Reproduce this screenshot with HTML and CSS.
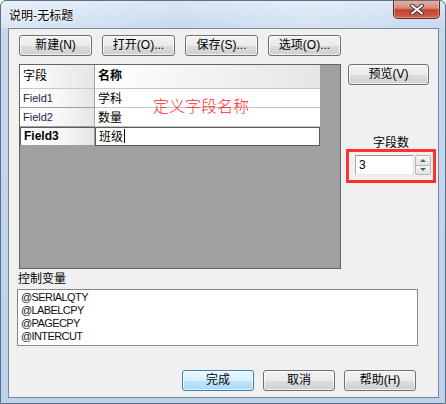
FILE: index.html
```html
<!DOCTYPE html>
<html lang="zh-CN">
<head>
<meta charset="utf-8">
<title>说明-无标题</title>
<link rel="stylesheet" href="styles.css">
</head>
<body>
<div class="window">
  <div class="titlebar">
    <span class="title">说明-无标题</span>
    <div class="close">
      <svg width="16" height="11" viewBox="0 0 16 11"><path d="M3 1.5 L13 9.5 M13 1.5 L3 9.5" stroke="#3a3a3a" stroke-width="4" stroke-linecap="round"/><path d="M3 1.5 L13 9.5 M13 1.5 L3 9.5" stroke="#ffffff" stroke-width="2" stroke-linecap="round"/></svg>
    </div>
  </div>
  <div class="client">
    <div class="toolbar">
      <div class="btn">新建(N)</div>
      <div class="btn">打开(O)...</div>
      <div class="btn">保存(S)...</div>
      <div class="btn">选项(O)...</div>
    </div>
    <div class="main">
      <div class="grid">
        <div class="row head">
          <div class="c1">字段</div>
          <div class="c2 bold">名称</div>
        </div>
        <div class="row">
          <div class="c1 fld">Field1</div>
          <div class="c2">学科</div>
        </div>
        <div class="row">
          <div class="c1 fld">Field2</div>
          <div class="c2">数量</div>
        </div>
        <div class="row current">
          <div class="c1 fld cur">Field3</div>
          <div class="c2 edit">班级<span class="caret"></span></div>
        </div>
        <div class="note">定义字段名称</div>
      </div>
      <div class="side">
        <div class="btn preview">预览(V)</div>
        <div class="count-label">字段数</div>
        <div class="highlight">
          <div class="input">3</div>
          <div class="spinner">
            <div class="arrow up"><span></span></div>
            <div class="arrow down"><span></span></div>
          </div>
        </div>
      </div>
    </div>
    <div class="vars-label">控制变量</div>
    <div class="listbox">
      <div class="item">@SERIALQTY</div>
      <div class="item">@LABELCPY</div>
      <div class="item">@PAGECPY</div>
      <div class="item">@INTERCUT</div>
    </div>
    <div class="footer">
      <div class="btn default">完成</div>
      <div class="btn">取消</div>
      <div class="btn">帮助(H)</div>
    </div>
  </div>
</div>
</body>
</html>
```

FILE: styles.css
```css
* { box-sizing: border-box; }

html, body {
  margin: 0;
  padding: 0;
  background: #ffffff;
}

body {
  font-family: "Liberation Sans", "Noto Sans CJK SC", sans-serif;
  font-size: 12px;
  color: #000;
}

.window {
  width: 446px;
  height: 404px;
  border: 1px solid #5e6f84;
  border-radius: 6px 6px 0 0;
  background: linear-gradient(180deg, #dbe7f6 0px, #c6d8ee 28px, #bcd1eb 100%);
  display: flex;
  flex-direction: column;
  overflow: hidden;
}

.titlebar {
  height: 27px;
  display: flex;
  align-items: flex-start;
  padding-left: 8px;
  background: linear-gradient(90deg, rgba(255,255,255,0.35), rgba(255,255,255,0) 40%, rgba(255,255,255,0.25) 70%, rgba(255,255,255,0) 100%);
}

.title {
  margin-top: 6px;
  font-family: "Noto Sans CJK SC", sans-serif;
  font-size: 12px;
  line-height: 16px;
  color: #000;
  text-shadow: 0 0 4px #ffffff, 0 0 2px #ffffff;
}

.close {
  margin-left: auto;
  margin-right: 5px;
  width: 47px;
  height: 19px;
  margin-top: -1px;
  border: 1px solid #5a2a24;
  border-top: none;
  border-radius: 0 0 5px 5px;
  background: linear-gradient(180deg, #e9b2a6 0%, #d98a78 45%, #c5412c 55%, #d1614a 100%);
  display: flex;
  align-items: center;
  justify-content: center;
  box-shadow: inset 0 0 0 1px rgba(255,255,255,0.35);
}

.client {
  margin: 0 6px 5px 7px;
  flex: 1;
  border: 1px solid #7a8797;
  background: #f0f0f0;
  display: flex;
  flex-direction: column;
  padding-top: 6px;
}

.btn {
  height: 21px;
  border: 1px solid #707070;
  border-radius: 3px;
  background: linear-gradient(180deg, #f2f2f2 0%, #ebebeb 50%, #dddddd 51%, #cfcfcf 100%);
  box-shadow: inset 0 0 0 1px rgba(255,255,255,0.7);
  font-family: "Liberation Sans", "Noto Sans CJK SC", sans-serif;
  font-size: 12px;
  line-height: 19px;
  text-align: center;
  color: #000;
  white-space: nowrap;
}

.btn.default {
  border-color: #3c7fb1;
  background: linear-gradient(180deg, #eaf6fd 0%, #d9f0fc 50%, #bee6fd 51%, #a7d9f5 100%);
}

.toolbar {
  display: flex;
  gap: 10px;
  padding-left: 10px;
}

.toolbar .btn { width: 73px; }

.main {
  display: flex;
  margin-top: 8px;
  padding-left: 10px;
}

.grid {
  position: relative;
  width: 322px;
  height: 205px;
  border: 1px solid #646464;
  background: #a0a0a0;
}

.row {
  display: flex;
  height: 19px;
  width: 300px;
}

.row.head { height: 24px; }

.c1 {
  width: 75px;
  border-right: 1px solid #a0a0a0;
  border-bottom: 1px solid #a0a0a0;
  background: linear-gradient(90deg, #ffffff 0%, #f6f6f6 60%, #e4e4e4 100%);
  padding-left: 3px;
  font-family: "Noto Sans CJK SC", sans-serif;
  font-size: 12px;
  line-height: 18px;
}

.c2 {
  flex: 1;
  border-bottom: 1px solid #c4c4c4;
  background: #ffffff;
  padding-left: 3px;
  font-family: "Noto Sans CJK SC", sans-serif;
  font-size: 12px;
  line-height: 18px;
}

.head .c1, .head .c2 {
  background: linear-gradient(90deg, #ffffff 0%, #f2f2f2 50%, #e6e6e6 100%);
  border-bottom: 1px solid #c8c8c8;
  line-height: 20px;
}

.head .c1 { border-right: 1px solid #a0a0a0; }

.bold { font-weight: bold; }

.c1.fld {
  font-family: "Liberation Sans", sans-serif;
  font-size: 11px;
  color: #1c2650;
  line-height: 19px;
}

.c1.cur {
  font-size: 12px;
  font-weight: bold;
  color: #000;
  border-top: 1px solid #5a5a5a;
  border-left: 1px solid #5a5a5a;
  line-height: 16px;
}

.row.current { height: 19px; }

.c2.edit {
  border: 1px solid #5a5a5a;
  line-height: 16px;
}

.caret {
  display: inline-block;
  width: 1px;
  height: 14px;
  background: #000;
  vertical-align: -2px;
  margin-left: 1px;
}

.note {
  position: absolute;
  left: 133px;
  top: 31px;
  font-family: "Noto Sans CJK SC", sans-serif;
  font-size: 16px;
  line-height: 18px;
  font-weight: 300;
  color: #ff2a2a;
}

.side {
  width: 95px;
  display: flex;
  flex-direction: column;
  padding-left: 5px;
}

.btn.preview {
  width: 81px;
  margin-left: 2px;
}

.count-label {
  margin-top: 50px;
  height: 14px;
  text-align: center;
  font-family: "Noto Sans CJK SC", sans-serif;
  font-size: 12px;
  line-height: 14px;
}

.highlight {
  width: 90px;
  height: 34px;
  border: 3px solid #ff3030;
  display: flex;
  align-items: center;
  padding-left: 6px;
  padding-bottom: 2px;
}

.input {
  width: 59px;
  height: 20px;
  border: 1px solid #abadb3;
  border-top-color: #8e9197;
  border-right-color: #dbdfe6;
  border-bottom-color: #e3e9ef;
  background: #fff;
  padding-left: 3px;
  font-size: 12px;
  line-height: 18px;
}

.spinner {
  width: 16px;
  height: 20px;
  display: flex;
  flex-direction: column;
  margin-left: 1px;
}

.arrow {
  flex: 1;
  border: 1px solid #b6b6b6;
  background: linear-gradient(180deg, #f6f6f6, #e2e2e2);
  display: flex;
  align-items: center;
  justify-content: center;
}

.arrow.up { border-radius: 2px 2px 0 0; }
.arrow.down { border-radius: 0 0 2px 2px; border-top: none; }

.arrow span {
  width: 0;
  height: 0;
  border-left: 3px solid transparent;
  border-right: 3px solid transparent;
}

.arrow.up span { border-bottom: 3px solid #4d6185; }
.arrow.down span { border-top: 3px solid #4d6185; }

.vars-label {
  margin-top: 1px;
  padding-left: 9px;
  height: 16px;
  font-family: "Noto Sans CJK SC", sans-serif;
  font-size: 12px;
  line-height: 16px;
}

.listbox {
  margin-top: 3px;
  margin-left: 8px;
  width: 401px;
  height: 57px;
  border: 1px solid #828790;
  background: #fff;
  padding: 1px 0 0 3px;
}

.item {
  font-family: "Liberation Sans", sans-serif;
  font-size: 11px;
  letter-spacing: -0.6px;
  line-height: 13px;
  color: #101010;
}

.footer {
  margin-top: 24px;
  display: flex;
  justify-content: flex-end;
  gap: 9px;
  padding-right: 22px;
}

.footer .btn { width: 72px; }
```
